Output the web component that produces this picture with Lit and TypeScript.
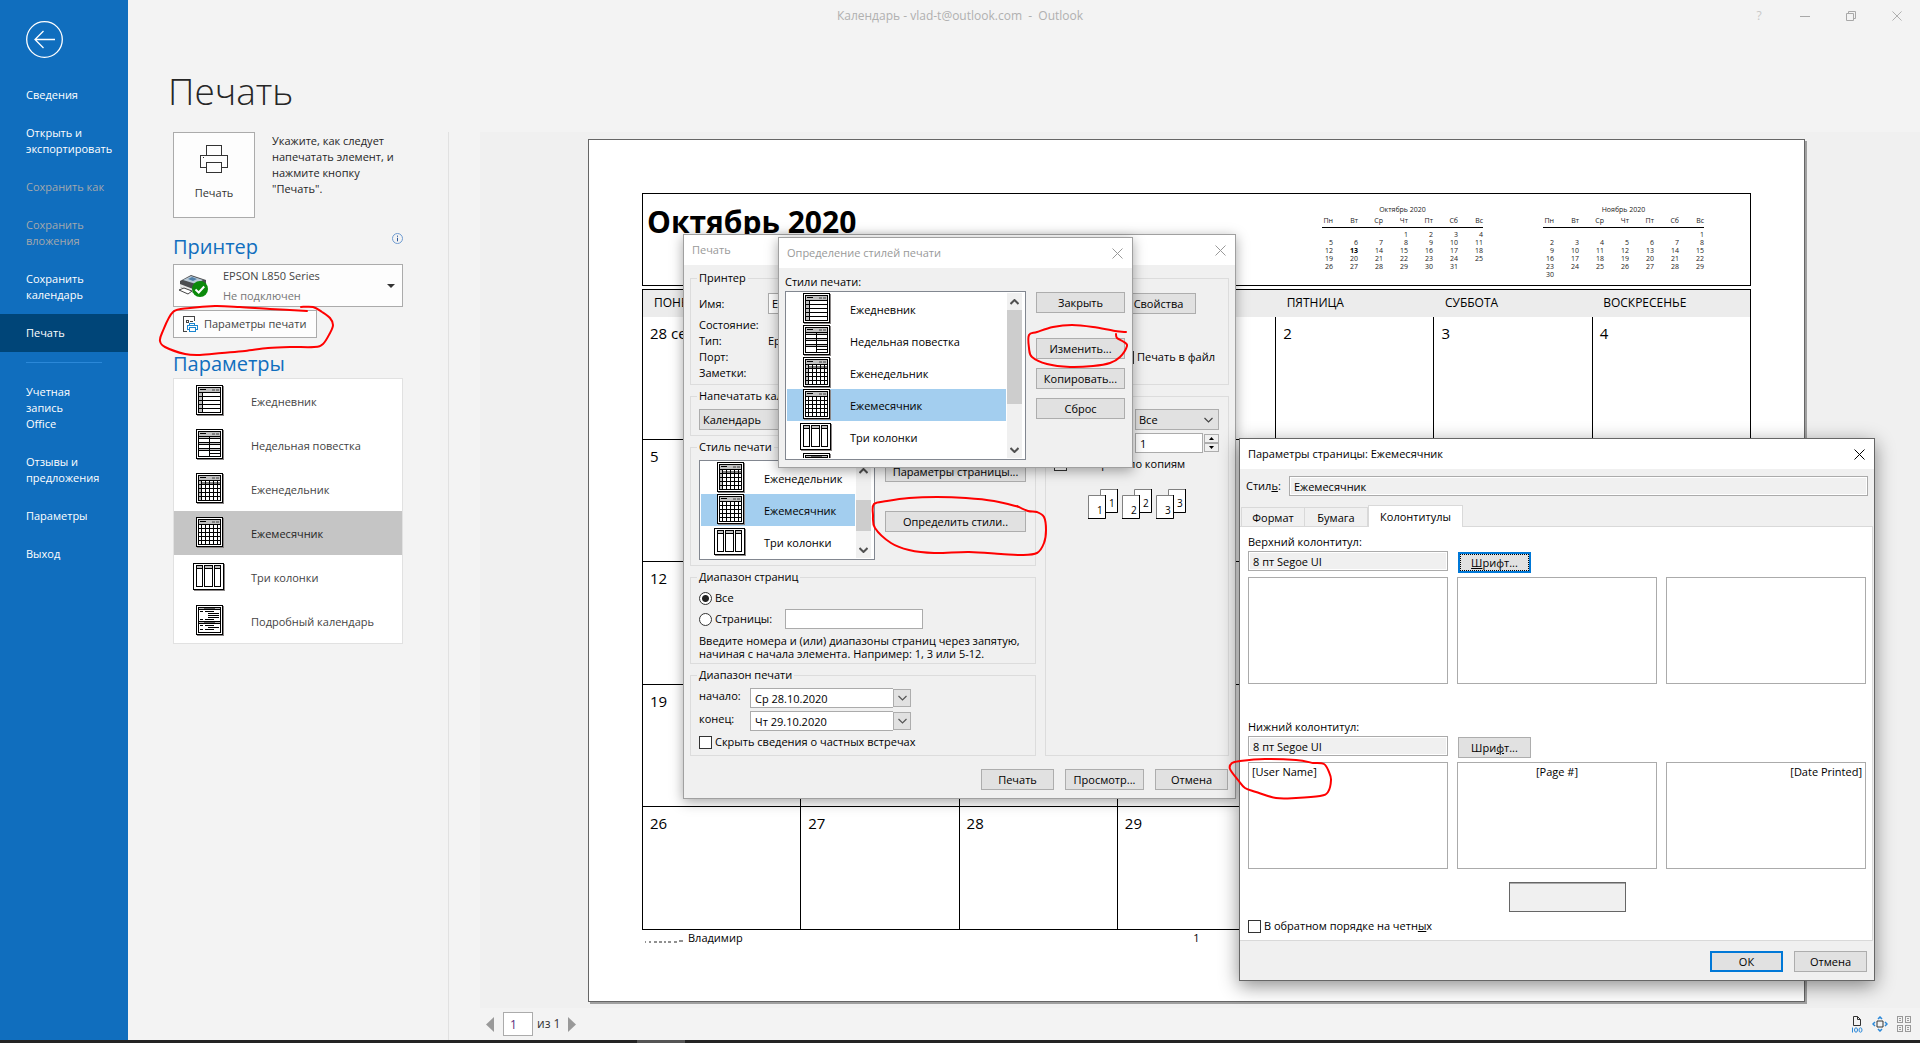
import { LitElement, html, css, svg, nothing, TemplateResult } from "lit";
import { customElement, property } from "lit/decorators.js";
import { classMap } from "lit/directives/class-map.js";

type StyleKind = "daily" | "agenda" | "weekly" | "monthly" | "trifold" | "detail";
interface PrintStyle { kind: StyleKind; name: string; }

const STYLES: PrintStyle[] = [
  { kind: "daily", name: "Ежедневник" },
  { kind: "agenda", name: "Недельная повестка" },
  { kind: "weekly", name: "Еженедельник" },
  { kind: "monthly", name: "Ежемесячник" },
  { kind: "trifold", name: "Три колонки" },
  { kind: "detail", name: "Подробный календарь" },
];

const NAV_TOP = [
  { label: "Сведения" },
  { label: "Открыть и\nэкспортировать" },
  { label: "Сохранить как", off: true },
  { label: "Сохранить\nвложения", off: true },
  { label: "Сохранить\nкалендарь" },
  { label: "Печать", current: true },
];
const NAV_BOTTOM = [
  { label: "Учетная\nзапись\nOffice" },
  { label: "Отзывы и\nпредложения" },
  { label: "Параметры" },
  { label: "Выход" },
];

const WEEKDAYS = ["ПОНЕДЕЛЬНИК", "", "", "", "ПЯТНИЦА", "СУББОТА", "ВОСКРЕСЕНЬЕ"];
const WEEKS = [
  ["28 сен", "", "", "", "2", "3", "4"],
  ["5", "", "", "", "", "", ""],
  ["12", "", "", "", "", "", ""],
  ["19", "", "", "", "", "", ""],
  ["26", "27", "28", "29", "", "", ""],
];

type Pt = [number, number];
const MARKS: Pt[][] = [
  [[301, 307], [313, 307], [322, 312], [330, 318], [333, 325], [330, 333], [323, 344], [314, 347], [290, 347], [268, 348], [245, 351], [222, 353], [200, 355], [185, 354], [165, 347], [160, 341], [162, 333], [173, 312], [190, 308], [215, 306], [240, 307], [270, 309], [307, 311]],
  [[1126, 332], [1115, 331], [1093, 327], [1072, 325], [1053, 327], [1037, 332], [1029, 335], [1029, 348], [1032, 357], [1047, 364], [1070, 367], [1093, 366], [1110, 363], [1120, 357], [1127, 346], [1124, 342], [1117, 338], [1116, 334]],
  [[1019, 507], [994, 501], [966, 498], [937, 497], [909, 498], [887, 501], [874, 504], [873, 515], [875, 528], [891, 543], [909, 550], [934, 553], [969, 552], [1001, 554], [1021, 555], [1037, 553], [1044, 543], [1046, 530], [1044, 517], [1037, 512], [1028, 511], [1017, 506]],
  [[1313, 763], [1296, 760], [1265, 759], [1240, 761], [1232, 763], [1230, 769], [1238, 780], [1245, 788], [1256, 792], [1276, 798], [1296, 798], [1320, 796], [1328, 792], [1331, 780], [1329, 772], [1324, 764], [1314, 763]],
];

function smooth(points: Pt[]): string {
  let d = `M${points[0][0]} ${points[0][1]}`;
  for (let i = 0; i < points.length - 1; i++) {
    const a = points[Math.max(i - 1, 0)];
    const b = points[i];
    const c = points[i + 1];
    const e = points[Math.min(i + 2, points.length - 1)];
    d += `C${b[0] + (c[0] - a[0]) / 6} ${b[1] + (c[1] - a[1]) / 6} ${c[0] - (e[0] - b[0]) / 6} ${c[1] - (e[1] - b[1]) / 6} ${c[0]} ${c[1]}`;
  }
  return d;
}

const box = (x: number, y: number, w: number, h: number, fill = "#000") =>
  svg`<rect x=${x} y=${y} width=${w} height=${h} fill=${fill}></rect>`;

function sheet(): TemplateResult[] {
  return [
    box(4, 1, 27, 30, "#8a8686"), box(3, 0, 27, 30), box(4, 1, 25, 28, "#fff"),
    box(5, 2, 23, 26), box(6, 3, 21, 24, "#fff"),
  ];
}
function header(): TemplateResult[] {
  return [box(6, 3, 21, 4, "#c0c0c0"), box(7, 4, 6, 1), box(19, 4, 3, 2, "#808080"), box(23, 4, 3, 2, "#808080"), box(6, 7, 21, 1)];
}

function styleIcon(kind: StyleKind): TemplateResult {
  const p: TemplateResult[] = [];
  if (kind === "trifold") {
    p.push(box(1, 3, 31, 27, "#8a8686"), box(0, 2, 31, 27), box(1, 3, 29, 25, "#fff"));
    for (const [x, w] of [[3, 7], [11, 9], [21, 7]]) {
      p.push(box(x, 4, w, 22), box(x + 1, 5, w - 2, 20, "#fff"), box(x + 1, 5, w - 2, 2, "#c0c0c0"), box(x, 7, w, 1));
    }
  } else {
    p.push(...sheet());
    if (kind !== "detail") p.push(...header());
    if (kind === "daily") {
      p.push(box(6, 8, 3, 19, "#c0c0c0"), box(9, 8, 1, 19));
      for (const y of [11, 15, 19, 23]) p.push(box(6, y, 21, 1));
    }
    if (kind === "agenda") {
      for (const y of [7, 13, 19]) p.push(box(6, y, 21, 1), box(6, y + 1, 21, 1, "#c0c0c0"), box(6, y + 2, 21, 1));
      p.push(box(16, 7, 1, 20), box(17, 24, 10, 1));
    }
    if (kind === "weekly") p.push(box(6, 8, 3, 19, "#c0c0c0"), box(9, 9, 18, 2, "#808080"));
    if (kind === "weekly" || kind === "monthly") {
      for (const x of [8, 12, 16, 20, 24]) p.push(box(x, 8, 1, 19));
      for (const y of [11, 15, 19, 23]) p.push(box(6, y, 21, 1));
    }
    if (kind === "detail") {
      for (const y of [3, 17]) p.push(box(6, y, 21, 1, "#c0c0c0"), box(11, y, 11, 1, "#606060"), box(6, y + 1, 21, 1));
      p.push(box(6, 16, 21, 1));
      for (const y of [6, 14, 20, 24]) p.push(box(7, y, 3, 1), box(12, y, 9, 1));
      for (const y of [8, 10, 12, 22]) p.push(box(15, y, 11, 1));
    }
  }
  return html`<svg class="style-icon" width="32" height="32" viewBox="0 0 32 32" shape-rendering="crispEdges" aria-hidden="true">${p}</svg>`;
}

const cross = (size: number) => html`<svg width=${size} height=${size} viewBox="0 0 11 11" aria-hidden="true">
  <path d="M.5 .5l10 10M10.5 .5l-10 10" fill="none" stroke="currentColor" stroke-width="1"></path></svg>`;
const chevron = (up = false) => html`<svg width="9" height="6" viewBox="0 0 9 6" aria-hidden="true">
  <path d=${up ? "M.5 5l4-4 4 4" : "M.5 1l4 4 4-4"} fill="none" stroke="currentColor" stroke-width="1.2"></path></svg>`;

const controls = css`
  * { box-sizing: border-box; }
  button, input, select, textarea { font: inherit; color: inherit; margin: 0; border-radius: 0; }
  button { padding: 0; cursor: default; }
  svg { display: block; flex: none; }
`;

@customElement("print-style-list")
export class PrintStyleList extends LitElement {
  @property({ attribute: false }) items: PrintStyle[] = [];
  @property({ type: Number }) thumbTop = 0;
  @property({ type: Number }) thumbSize = 30;

  static styles = [controls, css`
    :host { display: flex; border: 1px solid #828790; background: #fff; padding: 1px; }
    .rows { flex: 1; overflow: hidden; margin-right: 1px; }
    .row { display: flex; align-items: center; gap: 18px; width: 100%; height: 32px; padding-left: 13px; border: 0; background: none; text-align: left; white-space: nowrap; }
    .row span { padding-top: 2px; }
    .on { background: #a3ceef; }
    .bar { width: 15px; margin-right: 2px; background: #f0f0f0; display: flex; flex-direction: column; color: #505050; }
    .arrow { height: 17px; border: 0; background: none; display: flex; align-items: center; justify-content: center; }
    .arrow path { stroke-width: 2; }
    .track { flex: 1; }
    .thumb { background: #cdcdcd; }
  `];

  render() {
    return html`
      <div class="rows" role="listbox" aria-label="Стили печати">
        ${this.items.map((s) => html`<button role="option" aria-selected=${s.kind === "monthly"}
          class=${classMap({ row: true, on: s.kind === "monthly" })}>${styleIcon(s.kind)}${s.kind === "detail" ? nothing : html`<span>${s.name}</span>`}</button>`)}
      </div>
      <div class="bar">
        <button class="arrow" aria-label="Вверх">${chevron(true)}</button>
        <div class="track"><div class="thumb" style="margin-top:${this.thumbTop}px;height:${this.thumbSize}px"></div></div>
        <button class="arrow" aria-label="Вниз">${chevron()}</button>
      </div>`;
  }
}

@customElement("mini-month")
export class MiniMonth extends LitElement {
  @property() caption = "";
  @property({ type: Number }) offset = 0;
  @property({ type: Number }) days = 30;
  @property({ type: Number }) today = 0;

  static styles = css`
    :host { display: block; width: 161px; font-size: 7px; line-height: 8px; color: #222; }
    table { width: 100%; border-spacing: 0; table-layout: fixed; }
    caption { padding-bottom: 3px; }
    th, td { padding: 0; text-align: right; height: 8px; }
    th { font-weight: 400; padding-bottom: 2px; border-bottom: 1px solid #000; }
    th:first-child { width: 11px; }
    tbody tr:first-child td { padding-top: 3px; }
    .now { font-weight: 700; color: #000; }
  `;

  render() {
    const count = Math.ceil((this.offset + this.days) / 7);
    return html`<table>
      <caption>${this.caption}</caption>
      <thead><tr>${["Пн", "Вт", "Ср", "Чт", "Пт", "Сб", "Вс"].map((d) => html`<th scope="col">${d}</th>`)}</tr></thead>
      <tbody>${Array.from({ length: count }, (_, r) => html`<tr>${Array.from({ length: 7 }, (_, c) => {
        const n = r * 7 + c - this.offset + 1;
        return html`<td class=${n === this.today ? "now" : ""}>${n > 0 && n <= this.days ? n : nothing}</td>`;
      })}</tr>`)}</tbody>
    </table>`;
  }
}

@customElement("app-root")
export class AppRoot extends LitElement {
  static styles = [controls, css`
    :host { display: block; font: 11px/16px "Open Sans", "Noto Sans", sans-serif; color: #000; }
    .app { position: relative; display: flex; flex-direction: column; min-height: 100vh; overflow: hidden; background: #f3f3f3; }
    .shell { flex: 1; display: flex; }
    .taskbar { height: 3px; background: #232323; display: flex; }
    .taskbar i { width: 48px; margin-left: 637px; background: #555; }

    .side { width: 128px; flex: none; background: #106ebe; color: #fff; }
    .back { display: block; margin: 20px 0 18px 25px; border: 0; background: none; color: #fff; }
    .nav { display: block; width: 100%; padding: 11px 0 11px 26px; border: 0; background: none; text-align: left; white-space: pre; }
    .nav.off { color: #a4a8ac; }
    .nav.current { background: #004578; }
    .side hr { margin: 10px 26px; border: 0; height: 1px; background: #2b88d8; }

    .main { flex: 1; min-width: 0; display: flex; flex-direction: column; }
    .titlebar { position: relative; height: 32px; padding-right: 128px; text-align: center; font-size: 12px; line-height: 32px; color: #b0b0b0; white-space: pre; }
    .sys { position: absolute; right: 0; top: 0; display: flex; }
    .sys button { width: 46px; height: 32px; border: 0; background: none; display: flex; align-items: center; justify-content: center; color: #a8a8a8; }
    .sys .help { color: #c8c8c8; }
    h1 { margin: 0; height: 100px; padding: 32px 0 0 40px; font-size: 37px; line-height: 54px; font-weight: 300; color: #262626; }
    .work { flex: 1; display: flex; }
    .panel { width: 321px; flex: none; padding: 0 45px; border-right: 1px solid #e1e1e1; color: #444; }
    .intro { display: flex; gap: 17px; }
    .intro p { margin: 0; padding-top: 1px; color: #262626; white-space: pre; }
    .big { width: 82px; height: 86px; flex: none; border: 1px solid #ababab; background: #fdfdfd; display: flex; flex-direction: column; align-items: center; padding-top: 12px; gap: 12px; color: #333; }
    .head { display: flex; justify-content: space-between; margin: 15px 0 3px; }
    .head.low { margin: 12px 0 0; }
    h2 { margin: 0; font-size: 20px; line-height: 28px; font-weight: 400; color: #106ebe; }
    .info { width: 11px; height: 11px; border: 0; background: none; }
    .device { width: 230px; height: 43px; border: 1px solid #ababab; background: #fdfdfd; display: flex; align-items: center; padding: 0 7px 0 4px; text-align: left; gap: 15px; }
    .device span { flex: 1; display: flex; flex-direction: column; gap: 4px; }
    .device small { font-size: 11px; color: #777; }
    .options { margin-top: 3px; width: 144px; height: 28px; border: 1px solid #ababab; background: #fdfdfd; display: flex; align-items: center; gap: 6px; padding-left: 9px; white-space: nowrap; }
    .styles { width: 230px; border: 1px solid #e1e1e1; background: #fff; }
    .styles button { display: flex; gap: 26px; align-items: center; width: 100%; height: 44px; padding-left: 19px; border: 0; background: none; text-align: left; }
    .styles span { padding-top: 2px; }
    .styles .on { background: #c5c5c5; color: #262626; }

    .preview { flex: 1; margin-left: 31px; display: flex; flex-direction: column; }
    .canvas { flex: 1; background: #f0f0f0; padding: 7px 115px 6px 108px; display: flex; }
    .page { flex: 1; border: 1px solid #666; background: #fff; box-shadow: 2px 2px 0 #a0a0a0; padding: 53px 53px 0; }
    .month { height: 93px; border: 1px solid #000; display: flex; justify-content: space-between; padding-left: 4px; }
    .month strong { font-size: 30px; line-height: 40px; padding-top: 8px; }
    .minis { display: flex; gap: 60px; padding: 12px 46px 0 0; }
    .grid { width: 100%; height: 641px; margin-top: 3px; border-collapse: collapse; table-layout: fixed; border: 1px solid #000; }
    .grid th { height: 27px; padding: 0 0 0 11px; text-align: left; font-weight: 400; font-size: 12px; background: #ececec; }
    .grid td { height: 122px; padding: 6px 0 0 7px; vertical-align: top; border: 1px solid #000; border-top: 0; font-size: 15px; line-height: 20px; }
    .foot { display: grid; grid-template-columns: 1fr auto 1fr; line-height: 16px; font-size: 11px; }
    .foot span { display: flex; align-items: center; gap: 4px; }

    .pager { height: 32px; display: flex; align-items: center; justify-content: space-between; padding: 0 9px 0 6px; color: #333; font-size: 12px; }
    .pager div { display: flex; align-items: center; }
    .pager button { border: 0; background: none; }
    .pager input { width: 30px; height: 24px; border: 1px solid #ababab; background: #fff; padding: 0 6px; margin: 0 4px 0 9px; color: #5c2e7e; }
    .pager .next { margin-left: 8px; }
    .pager .views { gap: 9px; }

    .window { position: absolute; border: 1px solid #a0a0a0; background: #f0f0f0; box-shadow: 0 3px 12px rgba(0, 0, 0, .35); white-space: nowrap; }
    .caption { height: 30px; background: #fff; display: flex; align-items: center; justify-content: space-between; padding: 0 9px 0 8px; color: #999; }
    .caption button { border: 0; background: none; }
    .btn { height: 21px; border: 1px solid #adadad; background: #e1e1e1; text-align: center; line-height: 19px; }
    .field { height: 20px; border: 1px solid #ababab; background: #fff; padding: 0 4px; min-width: 0; }
    .drop { position: relative; display: flex; }
    .drop select { appearance: none; width: 100%; height: 21px; border: 1px solid #adadad; background: #e1e1e1; padding: 0 3px; }
    .drop svg { position: absolute; right: 6px; top: 8px; color: #444; }
    .drop.light select { background: #fff; }
    .tick { display: flex; align-items: center; gap: 3px; height: 16px; }
    .tick input { appearance: none; width: 13px; height: 13px; flex: none; border: 1px solid #333; background: #fff; }
    .tick input[type="radio"] { border-radius: 50%; }
    .tick input:checked { background: radial-gradient(circle, #222 0 3px, #fff 4px); }
    fieldset { margin: 0; min-width: 0; padding: 5px 9px 5px 8px; border: 1px solid #dcdcdc; }
    legend { margin-left: -2px; padding: 0 2px; line-height: 16px; }

    .print { left: 683px; top: 234px; width: 553px; }
    .print .body { padding: 5px 6px 8px; }
    .device-box { padding: 7px 8px 3px; }
    .name, .info-row { display: grid; grid-template-columns: 69px 353px 75px; height: 16px; }
    .name { height: 24px; align-items: start; line-height: 21px; }
    .name .drop { width: 340px; line-height: 16px; }
    .cols { display: grid; grid-template-columns: 346px 1fr; gap: 9px; margin-top: 3px; }
    .stack { display: flex; flex-direction: column; gap: 3px; }
    .style-box { display: flex; gap: 10px; }
    .style-box print-style-list { width: 176px; height: 100px; }
    .style-box div { width: 141px; display: flex; flex-direction: column; gap: 29px; padding-top: 1px; }
    .line { display: flex; align-items: center; }
    .tight { padding-bottom: 3px; }
    .pages-row { margin: 3px 0 5px; }
    .pages-row .tick { width: 86px; }
    .pages-row .field { width: 138px; }
    .hint { margin: 0; line-height: 13px; }
    .when { margin-bottom: 3px; }
    .when label { width: 51px; line-height: 16px; align-self: flex-start; }
    .when .field { width: 143px; border-right: 0; }
    .when .btn { width: 18px; height: 18px; display: flex; align-items: center; justify-content: center; color: #555; }
    .copy-box { margin-top: 8px; padding-top: 12px; }
    .copy { margin-left: 81px; display: flex; flex-direction: column; gap: 3px; }
    .copy .spin { display: flex; gap: 1px; align-items: center; }
    .copy .spin .field { width: 69px; }
    .copy .spin div { display: flex; flex-direction: column; }
    .copy .spin button { width: 15px; height: 9px; border: 1px solid #adadad; background: #f0f0f0; display: flex; align-items: center; justify-content: center; }
    .collate { margin-top: 3px; }
    .copies { margin: 17px 0 0 34px; }
    .actions { display: flex; justify-content: flex-end; gap: 11px; margin-top: 13px; padding-right: 1px; }
    .actions .btn { width: 73px; }
    .actions .wide { width: 79px; }

    .define { left: 778px; top: 237px; width: 355px; }
    .define .body { padding: 6px 7px 7px 6px; display: grid; grid-template-columns: 241px 89px; column-gap: 10px; row-gap: 1px; }
    .define p { margin: 0; grid-column: 1 / -1; }
    .define print-style-list { height: 169px; }
    .define .btns { display: flex; flex-direction: column; gap: 9px; padding-top: 1px; }
    .define .btns .btn:first-child { margin-bottom: 16px; }

    .setup { left: 1239px; top: 438px; width: 636px; border-color: #666; box-shadow: 0 5px 18px rgba(0, 0, 0, .45); }
    .setup .caption { color: #000; }
    .style-row { display: grid; grid-template-columns: 43px 1fr; align-items: center; padding: 7px 6px 9px 6px; }
    .setup .field[readonly] { background: #f0f0f0; box-shadow: inset 0 0 0 1px #fff; }
    .tabs { display: flex; align-items: flex-end; padding-left: 1px; }
    .tabs button { height: 19px; border: 1px solid #d9d9d9; border-bottom: 0; background: #f0f0f0; width: 64px; line-height: 20px; }
    .tabs .second { width: 63px; border-left: 0; }
    .tabs .active { height: 22px; width: 95px; background: #fff; margin-bottom: -1px; position: relative; line-height: 20px; }
    .sheet { background: #fff; border: 1px solid #d9d9d9; border-left: 0; margin-right: 1px; padding: 7px 6px 6px 8px; }
    .font-row { display: flex; gap: 10px; margin: 1px 0 6px; height: 20px; }
    .font-row .field { width: 200px; }
    .font-row .btn { width: 73px; margin-top: 1px; }
    .font-row .focus { border: 2px solid #0078d7; outline: 1px dotted #000; outline-offset: -3px; line-height: 17px; }
    .areas { display: grid; grid-template-columns: repeat(3, 1fr); gap: 9px; }
    .areas textarea { display: block; width: 100%; height: 107px; resize: none; border: 1px solid #ababab; padding: 1px 3px; background: #fff; }
    .areas .mid { text-align: center; }
    .areas .end { text-align: right; }
    .lower { margin-top: 35px; }
    .sheet .insert { display: block; width: 117px; height: 30px; margin: 13px 0 6px 261px; border: 1px solid #666; background: #f0f0f0; box-shadow: inset 0 1px 0 #aaa; }
    .setup .actions { margin: 0; padding: 10px 7px 8px; }
    .setup .default { border: 2px solid #0078d7; line-height: 17px; }

    .marks { position: absolute; left: 0; top: 0; pointer-events: none; }
  `];

  private navItem(i: { label: string; off?: boolean; current?: boolean }) {
    return html`<button class=${classMap({ nav: true, off: !!i.off, current: !!i.current })} ?disabled=${!!i.off}>${i.label}</button>`;
  }

  private panel() {
    return html`<section class="panel">
      <div class="intro">
        <button class="big">
          <svg width="28" height="28" viewBox="0 0 28 28" fill="none" stroke="#333" shape-rendering="crispEdges" aria-hidden="true">
            <path d="M6.500 10V.5h15V10M6 22.500H.5v-12h27v12H22M6.500 17.500h15v10h-15z"></path><path d="M3 12.500h1"></path></svg>
          Печать</button>
        <p>Укажите, как следует
напечатать элемент, и
нажмите кнопку
"Печать".</p>
      </div>
      <div class="head"><h2>Принтер</h2>
        <button class="info" aria-label="Сведения о принтере"><svg width="11" height="11" viewBox="0 0 11 11" fill="none" stroke="#6f9bd0" aria-hidden="true"><circle cx="5.500" cy="5.500" r="5"></circle><path d="M5.500 4.800v3.500M5.500 2.600v1.200" stroke="#2b579a"></path></svg></button></div>
      <button class="device" aria-haspopup="listbox">
        <svg width="30" height="24" viewBox="0 0 30 24" aria-hidden="true">
          <path d="M2 7L13 1l15 5v8l-12 5-14-6z" fill="#4b4d50"></path>
          <path d="M5 6l8-4 12 4-7 4z" fill="#b9c9d6"></path><path d="M10 5l4-2 5 2-4 2z" fill="#4f7fa8"></path>
          <path d="M2 10l13 5v3L2 13z" fill="#e8e8e8"></path><path d="M1 16l5-2 8 3-4 3z" fill="#fff" stroke="#444"></path>
          <circle cx="22" cy="15" r="8" fill="#0b8a0b"></circle><path d="M17.500 15.500l3.200 3 5.500-6" fill="none" stroke="#fff" stroke-width="2"></path></svg>
        <span>EPSON L850 Series<small>Не подключен</small></span>
        <svg width="8" height="4" viewBox="0 0 8 4" aria-hidden="true"><path d="M0 0h8L4 4z" fill="#333"></path></svg>
      </button>
      <button class="options">
        <svg width="15" height="16" viewBox="0 0 15 16" fill="none" stroke="#444" shape-rendering="crispEdges" aria-hidden="true">
          <path d="M4 15.500H.5V.5h11V5M3.500 4.500h2v2h-2zM7 5.500h3"></path>
          <path d="M6.500 9V7.500h5V9M6 13.500H4.500v-4h10v4H13M6.500 11.500h6v4h-6z" stroke="#1a86d0"></path></svg>
        Параметры печати</button>
      <div class="head low"><h2>Параметры</h2></div>
      <div class="styles" role="listbox" aria-label="Параметры">
        ${STYLES.map((s) => html`<button role="option" aria-selected=${s.kind === "monthly"} class=${s.kind === "monthly" ? "on" : ""}>${styleIcon(s.kind)}<span>${s.name}</span></button>`)}
      </div>
    </section>`;
  }

  private page() {
    return html`<div class="page">
      <div class="month"><strong>Октябрь 2020</strong>
        <div class="minis">
          <mini-month caption="Октябрь 2020" offset="3" days="31" today="13"></mini-month>
          <mini-month caption="Ноябрь 2020" offset="6" days="30"></mini-month>
        </div>
      </div>
      <table class="grid">
        <thead><tr>${WEEKDAYS.map((d) => html`<th scope="col">${d}</th>`)}</tr></thead>
        <tbody>${WEEKS.map((w) => html`<tr>${w.map((d) => html`<td>${d}</td>`)}</tr>`)}</tbody>
      </table>
      <div class="foot">
        <span><svg width="42" height="14" viewBox="0 0 42 14" aria-hidden="true"><path d="M3 11h1M7 11h2M12 11h3M17 11h3M22 11h2M26 11h3M32 11h3M37 10h4" stroke="#222" fill="none"></path></svg>Владимир</span>
        <span>1</span>
      </div>
    </div>`;
  }

  private printWindow() {
    return html`<section class="window print" role="dialog" aria-label="Печать">
      <div class="caption">Печать<button aria-label="Закрыть">${cross(11)}</button></div>
      <div class="body">
        <fieldset class="device-box"><legend>Принтер</legend>
          <div class="name"><label for="pname">Имя:</label>
            <span class="drop light"><select id="pname"><option>EPSON L850 Series</option></select></span>
            <button class="btn">Свойства</button></div>
          <div class="info-row">Состояние:</div>
          <div class="info-row"><span>Тип:</span><span>Epson</span></div>
          <div class="info-row"><span>Порт:</span><span></span><label class="tick"><input type="checkbox" />Печать в файл</label></div>
          <div class="info-row">Заметки:</div>
        </fieldset>
        <div class="cols">
          <div class="stack">
            <fieldset><legend>Напечатать календарь</legend>
              <span class="drop"><select aria-label="Напечатать календарь"><option>Календарь</option></select>${chevron()}</span></fieldset>
            <fieldset><legend>Стиль печати</legend>
              <div class="style-box">
                <print-style-list .items=${STYLES.slice(2, 5)} .thumbTop=${21} .thumbSize=${31}></print-style-list>
                <div><button class="btn">Параметры страницы...</button><button class="btn">Определить стили..</button></div>
              </div></fieldset>
            <fieldset class="tight"><legend>Диапазон страниц</legend>
              <label class="tick"><input type="radio" name="range" checked />Все</label>
              <div class="line pages-row"><label class="tick"><input type="radio" name="range" />Страницы:</label>
                <input class="field" type="text" aria-label="Номера страниц" /></div>
              <p class="hint">Введите номера и (или) диапазоны страниц через запятую,<br />начиная с начала элемента. Например: 1, 3 или 5-12.</p></fieldset>
            <fieldset><legend>Диапазон печати</legend>
              <div class="line when"><label for="from">начало:</label><input class="field" id="from" .value=${"Ср 28.10.2020"} /><button class="btn" aria-label="Выбрать начало">${chevron()}</button></div>
              <div class="line when"><label for="to">конец:</label><input class="field" id="to" .value=${"Чт 29.10.2020"} /><button class="btn" aria-label="Выбрать конец">${chevron()}</button></div>
              <label class="tick"><input type="checkbox" />Скрыть сведения о частных встречах</label></fieldset>
          </div>
          <fieldset class="copy-box" aria-label="Копии">
            <div class="copy">
              <span class="drop"><select aria-label="Страницы"><option>Все</option></select>${chevron()}</span>
              <span class="spin"><input class="field" type="text" aria-label="Число копий" .value=${"1"} />
                <div><button aria-label="Больше"><svg width="5" height="3" viewBox="0 0 5 3"><path d="M0 3h5L2.500 0z"></path></svg></button>
                <button aria-label="Меньше"><svg width="5" height="3" viewBox="0 0 5 3"><path d="M0 0h5L2.500 3z"></path></svg></button></div></span>
            </div>
            <label class="tick collate"><input type="checkbox" />Разобрать по копиям</label>
            <svg class="copies" width="100" height="31" viewBox="0 0 100 31" font-size="10" aria-hidden="true">
              ${[1, 2, 3].map((n) => svg`<g transform="translate(${(n - 1) * 34} 0)">
                <path d="M12.500 .5h17v23h-17z" fill="#fff" stroke="#808080"></path><path d="M29.500 0v23.500H12" fill="none" stroke="#000"></path>
                <text x="21" y="18">${n}</text>
                <path d="M.5 6.500h17v23H.5z" fill="#fff" stroke="#808080"></path><path d="M17.500 6v23.500H0" fill="none" stroke="#000"></path>
                <text x="9" y="25">${n}</text></g>`)}
            </svg>
          </fieldset>
        </div>
        <div class="actions"><button class="btn">Печать</button><button class="btn wide">Просмотр...</button><button class="btn">Отмена</button></div>
      </div>
    </section>`;
  }

  private defineWindow() {
    return html`<section class="window define" role="dialog" aria-label="Определение стилей печати">
      <div class="caption">Определение стилей печати<button aria-label="Закрыть">${cross(11)}</button></div>
      <div class="body">
        <p>Стили печати:</p>
        <print-style-list .items=${STYLES} .thumbTop=${0} .thumbSize=${94}></print-style-list>
        <div class="btns"><button class="btn">Закрыть</button><button class="btn">Изменить...</button><button class="btn">Копировать...</button><button class="btn">Сброс</button></div>
      </div>
    </section>`;
  }

  private setupWindow() {
    return html`<section class="window setup" role="dialog" aria-label="Параметры страницы">
      <div class="caption">Параметры страницы: Ежемесячник<button aria-label="Закрыть">${cross(11)}</button></div>
      <div class="style-row"><label for="sname">Стил<u>ь</u>:</label><input class="field" id="sname" readonly .value=${"Ежемесячник"} /></div>
      <div class="tabs" role="tablist"><button role="tab">Формат</button><button role="tab" class="second">Бумага</button><button role="tab" class="active" aria-selected="true">Колонтитулы</button></div>
      <div class="sheet">
        <label for="hfont">Верхний колонтитул:</label>
        <div class="font-row"><input class="field" id="hfont" readonly .value=${"8 пт Segoe UI"} /><button class="btn focus"><u>Ш</u>рифт...</button></div>
        <div class="areas">
          <textarea aria-label="Верхний слева"></textarea><textarea class="mid" aria-label="Верхний в центре"></textarea><textarea class="end" aria-label="Верхний справа"></textarea></div>
        <div class="lower"><label for="ffont">Нижний колонтитул:</label></div>
        <div class="font-row"><input class="field" id="ffont" readonly .value=${"8 пт Segoe UI"} /><button class="btn">Шри<u>ф</u>т...</button></div>
        <div class="areas">
          <textarea aria-label="Нижний слева" .value=${"[User Name]"}></textarea><textarea class="mid" aria-label="Нижний в центре" .value=${"[Page #]"}></textarea><textarea class="end" aria-label="Нижний справа" .value=${"[Date Printed]"}></textarea></div>
        <button class="insert" aria-label="Вставить поле"></button>
        <label class="tick"><input type="checkbox" /><span>В обратном порядке на четн<u>ы</u>х</span></label>
      </div>
      <div class="actions"><button class="btn default">ОК</button><button class="btn">Отмена</button></div>
    </section>`;
  }

  render() {
    return html`<div class="app">
      <div class="shell">
        <nav class="side">
          <button class="back" aria-label="Назад"><svg width="38" height="38" viewBox="0 0 38 38" fill="none" stroke="#fff" aria-hidden="true">
            <circle cx="19.500" cy="19.500" r="17.800" stroke-width="1.300"></circle><path d="M30 19.500H10M18.500 11L10 19.500l8.500 8.500" stroke-width="1.300"></path></svg></button>
          ${NAV_TOP.map((i) => this.navItem(i))}<hr />${NAV_BOTTOM.map((i) => this.navItem(i))}
        </nav>
        <main class="main">
          <header class="titlebar">Календарь - vlad-t@outlook.com  -  Outlook<div class="sys">
            <button class="help" aria-label="Справка">?</button>
            <button aria-label="Свернуть"><svg width="10" height="1" viewBox="0 0 10 1"><path d="M0 .5h10" stroke="currentColor"></path></svg></button>
            <button aria-label="Развернуть"><svg width="10" height="10" viewBox="0 0 10 10" fill="none" stroke="currentColor"><path d="M.5 2.500h7v7h-7zM2.500 2.500v-2h7v7h-2"></path></svg></button>
            <button aria-label="Закрыть окно">${cross(10)}</button></div></header>
          <h1>Печать</h1>
          <div class="work">
            ${this.panel()}
            <section class="preview">
              <div class="canvas">${this.page()}</div>
              <div class="pager">
                <div><button aria-label="Предыдущая"><svg width="8" height="15" viewBox="0 0 8 15"><path d="M8 0v15L0 7.500z" fill="#999"></path></svg></button>
                  <input aria-label="Страница" .value=${"1"} />из 1
                  <button class="next" aria-label="Следующая"><svg width="8" height="15" viewBox="0 0 8 15"><path d="M0 0v15l8-7.500z" fill="#999"></path></svg></button></div>
                <div class="views">
                  <button aria-label="Масштаб 100"><svg width="12" height="17" viewBox="0 0 12 17" fill="none"><path d="M2.500 .5h4l3 3v6h-7zM6.500 .5v3h3" stroke="#333"></path><path d="M1.500 11.500v5" stroke="#2b88d8"></path><ellipse cx="5" cy="14" rx="1.500" ry="2.200" stroke="#2b88d8"></ellipse><ellipse cx="9.500" cy="14" rx="1.500" ry="2.200" stroke="#2b88d8"></ellipse></svg></button>
                  <button aria-label="Страница целиком"><svg width="16" height="16" viewBox="0 0 16 16" fill="none"><path d="M5 5h6v6H5z" stroke="#333"></path><path d="M6 3l2-2 2 2M6 13l2 2 2-2M3 6L1 8l2 2M13 6l2 2-2 2" stroke="#2b88d8" stroke-width="1.500"></path></svg></button>
                  <button aria-label="Несколько страниц"><svg width="14" height="16" viewBox="0 0 14 16" fill="none" stroke="#999" shape-rendering="crispEdges"><path d="M.5 .5h5v6h-5zM8.500 .5h5v6h-5zM.5 9.500h5v6h-5zM8.500 9.500h5v6h-5zM2 2.500h2M2 4.500h2M10 2.500h2M10 4.500h2M2 11.500h2M2 13.500h2M10 11.500h2M10 13.500h2"></path></svg></button>
                </div>
              </div>
            </section>
          </div>
        </main>
      </div>
      <div class="taskbar"><i></i></div>
      ${this.printWindow()}${this.defineWindow()}${this.setupWindow()}
      <svg class="marks" width="1920" height="1043" viewBox="0 0 1920 1043" fill="none" stroke="#f00" stroke-width="2" stroke-linecap="round" aria-hidden="true">
        ${MARKS.map((m) => svg`<path d=${smooth(m)}></path>`)}
      </svg>
    </div>`;
  }
}
